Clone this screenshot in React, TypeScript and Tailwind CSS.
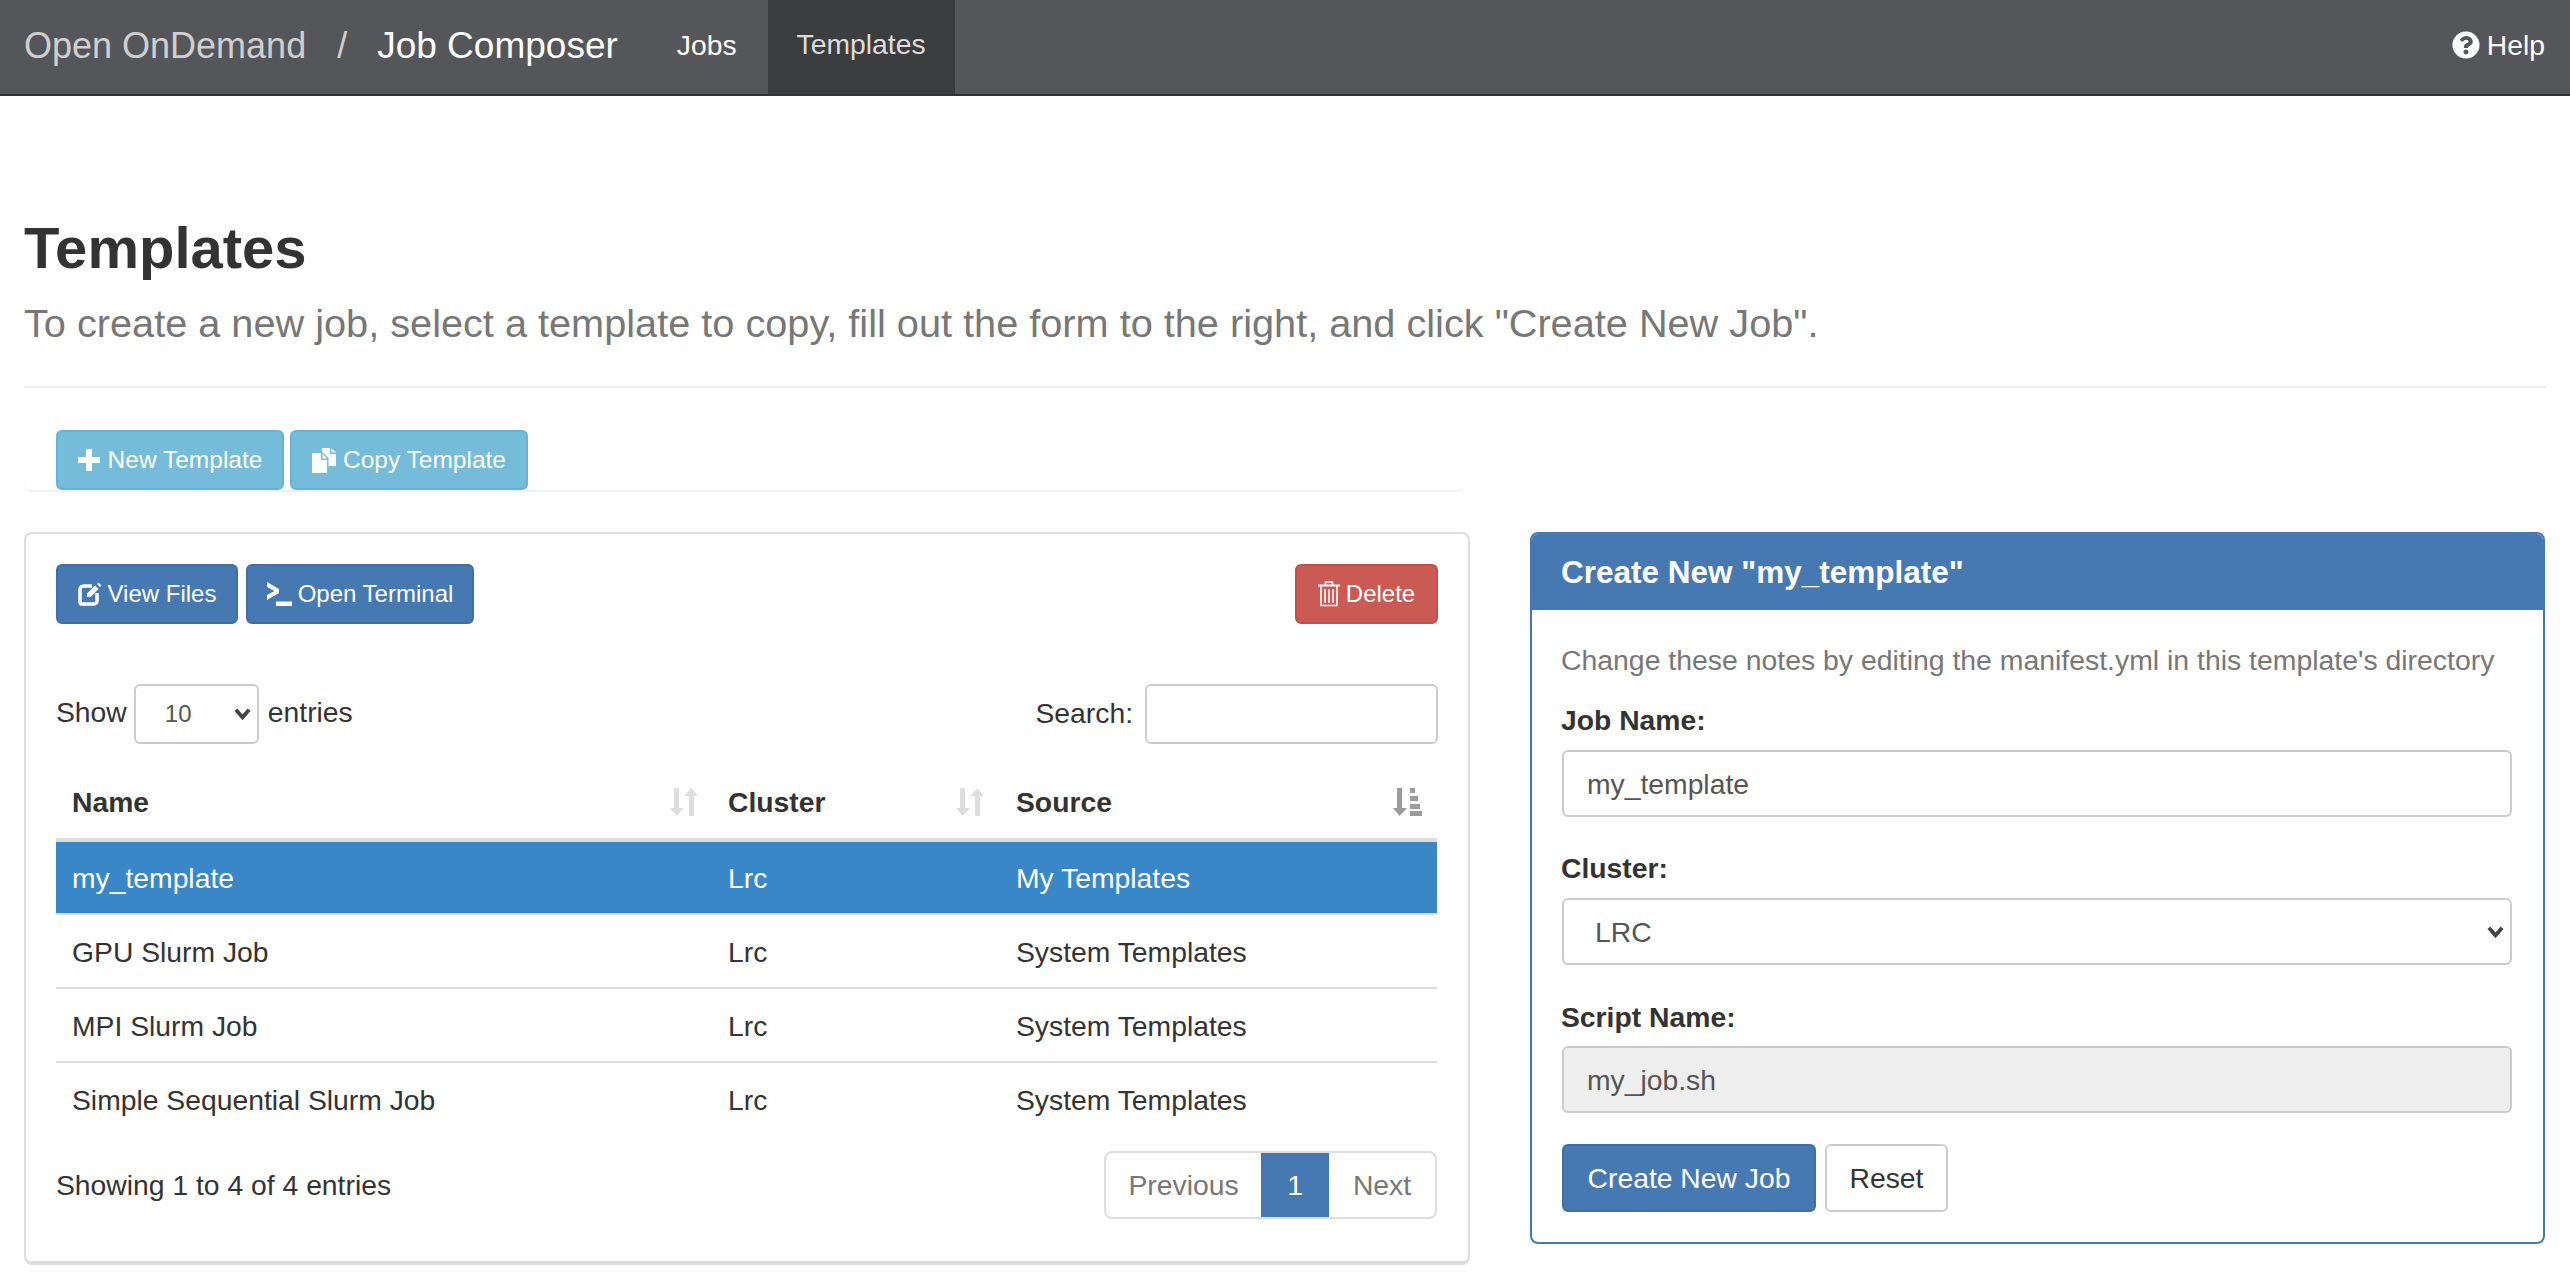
import { FaQuestionCircle } from 'react-icons/fa';

const rows = [
  { name: 'my_template', cluster: 'Lrc', source: 'My Templates', selected: true },
  { name: 'GPU Slurm Job', cluster: 'Lrc', source: 'System Templates' },
  { name: 'MPI Slurm Job', cluster: 'Lrc', source: 'System Templates' },
  { name: 'Simple Sequential Slurm Job', cluster: 'Lrc', source: 'System Templates' },
];

function PlusIcon() {
  return (
    <svg viewBox="0 0 22 22" className="h-[22px] w-[22px]" fill="currentColor">
      <path d="M8 0h6v8h8v6h-8v8H8v-8H0V8h8z" />
    </svg>
  );
}

function CopyIcon() {
  return (
    <svg viewBox="0 0 25 25" className="h-[25px] w-[25px]" fill="currentColor">
      <path d="M0 5h9v7h6v13H0z" />
      <path d="M10.500 5.500l4.500 5h-4.500z" />
      <path d="M10 0h8v6h6v12h-7.500V10L11 4.500h-1z" />
      <path d="M19.500 0.500L24 4.500h-4.500z" />
    </svg>
  );
}

function EditIcon() {
  return (
    <svg viewBox="0 0 24 24" className="h-[24px] w-[24px]" fill="none" stroke="currentColor">
      <path d="M14 4H5.500A3.500 3.500 0 0 0 2 7.500v13A2 2 0 0 0 4 22h12a3 3 0 0 0 3-3v-8" strokeWidth="3.500" />
      <path d="M9 11.500l8-8 3.500 3.500-8 8H9z" fill="currentColor" strokeWidth="0" />
      <path d="M20.500 0.500l3 3-1.500 1.500-3-3z" fill="currentColor" strokeWidth="0" />
    </svg>
  );
}

function TerminalIcon() {
  return (
    <svg viewBox="0 0 25 24" className="h-[24px] w-[25px]" fill="currentColor">
      <path d="M0 0l12 7v4L0 18v-5l7.500-4L0 5z" />
      <path d="M9 19.500h16V24H9z" />
    </svg>
  );
}

function TrashIcon() {
  return (
    <svg viewBox="0 0 22 26" className="h-[26px] w-[22px]" fill="none" stroke="currentColor" strokeWidth="1.600">
      <path d="M0 4.500h22" strokeWidth="2" />
      <path d="M7.500 4V1h7v3" />
      <path d="M3 5v19.500h16V5" />
      <path d="M7 8v14M11 8v14M15 8v14" />
    </svg>
  );
}

function SortBothIcon() {
  return (
    <svg viewBox="0 0 28 28" className="h-[28px] w-[28px] text-[#dedede]" fill="currentColor">
      <path d="M4 0h5v20h5l-7.500 8L0 20h4z" />
      <path d="M19 8h-5L21.500 0 28 8h-4v20h-5z" />
    </svg>
  );
}

function SortAttrIcon() {
  return (
    <svg viewBox="0 0 29 28" className="h-[28px] w-[29px] text-[#9c9c9c]" fill="currentColor">
      <path d="M4 0h5v20h5l-7.500 8L0 20h4z" />
      <path d="M17 0h5v5h-5zM17 8h8v5h-8zM17 16h10v5H17zM17 23h12v5H17z" />
    </svg>
  );
}

function Chevron() {
  return (
    <svg viewBox="0 0 18 13" className="pointer-events-none absolute right-[8px] top-1/2 h-[13px] w-[17px] -translate-y-1/2 text-[#444]" fill="none" stroke="currentColor" strokeWidth="4">
      <path d="M2 2l7 8 7-8" />
    </svg>
  );
}

export default function App() {
  return (
    <div className="min-h-[1278px] bg-white font-['Liberation_Sans',Arial,sans-serif] text-[28.3px] text-[#333]">
      <nav className="flex h-[96px] items-center border-b-2 border-[#333] bg-[#55565a] pb-[2px] pl-6 pr-[25px]">
        <span className="text-[36px] text-[#cfcfcf]">Open OnDemand</span>
        <span className="ml-[31px] text-[36px] text-[#cfcfcf]">/</span>
        <span className="ml-[30px] text-[37px] text-white">Job Composer</span>
        <a className="mb-[2px] ml-[59px] text-white">Jobs</a>
        <a className="-my-[2px] ml-[31px] flex h-[96px] items-center bg-[#3c3d3f] pb-[4px] px-[29px] text-[#dcdcdc]">Templates</a>
        <a className="mb-[2px] ml-auto flex items-center gap-[7px] text-white">
          <FaQuestionCircle className="h-[28px] w-[28px]" />
          Help
        </a>
      </nav>

      <main className="px-6">
        <h1 className="mt-[118px] text-[58px] font-bold leading-[68px]">Templates</h1>
        <p className="mt-[19px] text-[39.7px] leading-[44px] text-[#777]">
          To create a new job, select a template to copy, fill out the form to the right, and click "Create New Job".
        </p>
        <hr className="mt-[41px] border-t-2 border-[#eee]" />

        <div className="mt-[42px] flex w-[1441px] gap-[6px] rounded-b-lg border-b-2 border-[#f1f1f1] pl-[32px]">
          <button className="flex h-[60px] w-[228px] items-center justify-center gap-[8px] rounded-md border-2 border-[#68b3d1] bg-[#74bcd9] text-[24.500px] text-white">
            <PlusIcon />
            New Template
          </button>
          <button className="flex h-[60px] w-[238px] items-center justify-center gap-[6px] rounded-md border-2 border-[#68b3d1] bg-[#74bcd9] text-[24.500px] text-white">
            <CopyIcon />
            Copy Template
          </button>
        </div>

        <div className="mt-[40px] flex items-start gap-[60px]">
          <section className="h-[733px] w-[1446px] rounded-lg border-2 border-b-4 border-[#ddd] px-[30px] pt-[30px]">
            <div className="flex justify-between">
              <div className="flex gap-[8px]">
                <button className="flex h-[60px] w-[182px] items-center justify-center gap-[6px] rounded-md border-2 border-[#3f6fa5] bg-[#4679b2] text-[24px] text-white">
                  <EditIcon />
                  View Files
                </button>
                <button className="flex h-[60px] w-[228px] items-center justify-center gap-[6px] rounded-md border-2 border-[#3f6fa5] bg-[#4679b2] text-[24px] text-white">
                  <TerminalIcon />
                  Open Terminal
                </button>
              </div>
              <button className="flex h-[60px] w-[143px] items-center justify-center gap-[6px] rounded-md border-2 border-[#c24f49] bg-[#c95a54] text-[24px] text-white">
                <TrashIcon />
                Delete
              </button>
            </div>

            <div className="mt-[60px] flex items-center justify-between">
              <div className="flex items-center">
                <span className="mb-[3px]">Show</span>
                <div className="relative ml-[7px] mr-[9px] h-[60px] w-[125px]">
                  <select className="h-full w-full appearance-none rounded-md border-2 border-[#ccc] bg-white pl-[29px] text-[24px] text-[#555]" defaultValue="10">
                    <option>10</option>
                    <option>25</option>
                    <option>50</option>
                  </select>
                  <Chevron />
                </div>
                <span className="mb-[3px]">entries</span>
              </div>
              <div className="flex items-center gap-[12px]">
                <span className="mb-[2px]">Search:</span>
                <input className="h-[60px] w-[293px] rounded-md border-2 border-[#ccc] bg-white" />
              </div>
            </div>

            <table className="mt-[24px] w-[1381px] table-fixed border-collapse">
              <colgroup>
                <col className="w-[656px]" />
                <col className="w-[288px]" />
                <col />
              </colgroup>
              <thead>
                <tr className="h-[72px] border-b-4 border-[#ddd]">
                  <th className="pb-[2px] pl-4 pr-[14px] text-left font-bold">
                    <div className="flex items-center justify-between">Name<SortBothIcon /></div>
                  </th>
                  <th className="pb-[2px] pl-4 pr-[16px] text-left font-bold">
                    <div className="flex items-center justify-between">Cluster<SortBothIcon /></div>
                  </th>
                  <th className="pb-[2px] pl-4 pr-[15px] text-left font-bold">
                    <div className="flex items-center justify-between">Source<SortAttrIcon /></div>
                  </th>
                </tr>
              </thead>
              <tbody>
                {rows.map((row) => (
                  <tr
                    key={row.name}
                    className={`h-[74px] border-b-2 border-[#ddd] last:border-b-0 ${row.selected ? 'bg-[#3a87c7] text-white' : ''}`}
                  >
                    <td className="pl-4 pt-[2px]">{row.name}</td>
                    <td className="pl-4 pt-[2px]">{row.cluster}</td>
                    <td className="pl-4 pt-[2px]">{row.source}</td>
                  </tr>
                ))}
              </tbody>
            </table>

            <div className="mt-[15px] flex w-[1381px] items-center justify-between">
              <span>Showing 1 to 4 of 4 entries</span>
              <div className="flex h-[68px] overflow-hidden rounded-lg border-2 border-[#ddd] text-[#777]">
                <a className="flex w-[155px] items-center justify-center">Previous</a>
                <a className="-my-[2px] flex w-[68px] items-center justify-center bg-[#4679b2] text-white">1</a>
                <a className="flex w-[106px] items-center justify-center">Next</a>
              </div>
            </div>
          </section>

          <section className="h-[712px] w-[1015px] overflow-hidden rounded-lg border-2 border-[#4679b2]">
            <h2 className="flex h-[76px] items-center bg-[#4679b2] px-[29px] pt-[2px] text-[31.500px] font-bold text-white">
              Create New "my_template"
            </h2>
            <div className="pl-[30px] pr-[31px] pt-[32px]">
              <p className="-ml-px whitespace-nowrap text-[28.400px] leading-[36px] text-[#777]">Change these notes by editing the manifest.yml in this template's directory</p>
              <label className="-ml-px mt-[24px] block font-bold leading-[36px]">Job Name:</label>
              <input
                className="mt-[12px] block h-[67px] w-full rounded-md border-2 border-[#ccc] pl-[23px] pr-[24px] pt-[2px] text-[#555]"
                defaultValue="my_template"
              />
              <label className="-ml-px mt-[33px] block font-bold leading-[36px]">Cluster:</label>
              <div className="relative mt-[12px] h-[67px]">
                <select className="h-full w-full appearance-none rounded-md border-2 border-[#ccc] bg-white pl-[31px] pr-[30px] pt-[2px] text-[#555]" defaultValue="LRC">
                  <option>LRC</option>
                </select>
                <Chevron />
              </div>
              <label className="-ml-px mt-[34px] block font-bold leading-[36px]">Script Name:</label>
              <input
                className="mt-[11px] block h-[67px] w-full rounded-md border-2 border-[#ccc] bg-[#eee] pl-[23px] pr-[24px] pt-[2px] text-[#555]"
                defaultValue="my_job.sh"
                disabled
              />
              <div className="mt-[31px] flex gap-[9px]">
                <button className="h-[68px] w-[254px] rounded-md border-2 border-[#3f6fa5] bg-[#4679b2] text-white">Create New Job</button>
                <button className="h-[68px] w-[123px] rounded-md border-2 border-[#ccc] bg-white">Reset</button>
              </div>
            </div>
          </section>
        </div>
      </main>
    </div>
  );
}
